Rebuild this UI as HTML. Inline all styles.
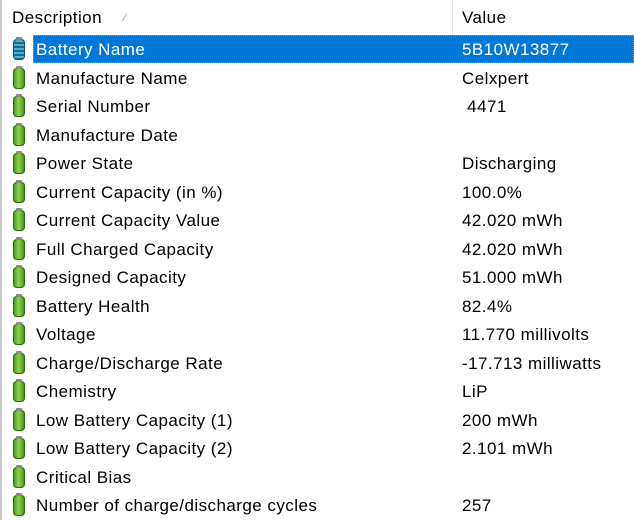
<!DOCTYPE html><html><head><style>
body{margin:0;width:634px;height:520px;overflow:hidden;background:#fff;font-family:"Liberation Sans",sans-serif;font-size:17px;letter-spacing:0.45px;color:#000;position:relative}
.lb{position:absolute;left:0;top:0;width:2px;height:520px;background:#c8c8c8}
.h{position:absolute;top:1px;height:34px;line-height:34px}
.sep{position:absolute;left:452px;top:0;width:1px;height:34px;background:#e5e5e5}
.r{position:absolute;left:0;width:634px;height:28px}
.ic{position:absolute;left:13px;top:4px;width:12px;height:21px;border-radius:4px;background:linear-gradient(90deg,#3f8a1a,#8ed24a 45%,#6ab82e 70%,#3d7a18);box-shadow:0 0 0 1px #2f6a12 inset}
.ic:before{content:"";position:absolute;left:3px;top:-2px;width:6px;height:3px;background:#888;border-radius:1px}
.d{position:absolute;left:36px;top:1px;line-height:28px}
.v{position:absolute;left:462px;top:1px;line-height:28px}
.sel{position:absolute;left:33px;top:0;width:601px;height:28px;background:#0078d7;outline:1px dotted #e08a30;outline-offset:-1px}
.sel ~ .d,.sel ~ .v{color:#fff}
.ic.b{background:repeating-linear-gradient(0deg,#1a6a9a 0 2px,#4fb0c8 2px 4px);box-shadow:0 0 0 1px #125070 inset}
</style></head><body>
<div class="lb"></div>
<div class="h" style="left:12px">Description</div>
<div class="h" style="left:124px;font-size:11px;color:#999">⁄</div>
<div class="sep"></div>
<div class="h" style="left:462px">Value</div>
<div class="r" style="top:35px"><div class="sel"></div><div class="ic b"></div><div class="d">Battery Name</div><div class="v">5B10W13877</div></div>
<div class="r" style="top:64px"><div class="ic"></div><div class="d">Manufacture Name</div><div class="v">Celxpert</div></div>
<div class="r" style="top:92px"><div class="ic"></div><div class="d">Serial Number</div><div class="v">&nbsp;4471</div></div>
<div class="r" style="top:121px"><div class="ic"></div><div class="d">Manufacture Date</div><div class="v"></div></div>
<div class="r" style="top:149px"><div class="ic"></div><div class="d">Power State</div><div class="v">Discharging</div></div>
<div class="r" style="top:178px"><div class="ic"></div><div class="d">Current Capacity (in %)</div><div class="v">100.0%</div></div>
<div class="r" style="top:206px"><div class="ic"></div><div class="d">Current Capacity Value</div><div class="v">42.020 mWh</div></div>
<div class="r" style="top:235px"><div class="ic"></div><div class="d">Full Charged Capacity</div><div class="v">42.020 mWh</div></div>
<div class="r" style="top:263px"><div class="ic"></div><div class="d">Designed Capacity</div><div class="v">51.000 mWh</div></div>
<div class="r" style="top:292px"><div class="ic"></div><div class="d">Battery Health</div><div class="v">82.4%</div></div>
<div class="r" style="top:320px"><div class="ic"></div><div class="d">Voltage</div><div class="v">11.770 millivolts</div></div>
<div class="r" style="top:349px"><div class="ic"></div><div class="d">Charge/Discharge Rate</div><div class="v">-17.713 milliwatts</div></div>
<div class="r" style="top:377px"><div class="ic"></div><div class="d">Chemistry</div><div class="v">LiP</div></div>
<div class="r" style="top:406px"><div class="ic"></div><div class="d">Low Battery Capacity (1)</div><div class="v">200 mWh</div></div>
<div class="r" style="top:434px"><div class="ic"></div><div class="d">Low Battery Capacity (2)</div><div class="v">2.101 mWh</div></div>
<div class="r" style="top:463px"><div class="ic"></div><div class="d">Critical Bias</div><div class="v"></div></div>
<div class="r" style="top:491px"><div class="ic"></div><div class="d">Number of charge/discharge cycles</div><div class="v">257</div></div>
</body></html>
